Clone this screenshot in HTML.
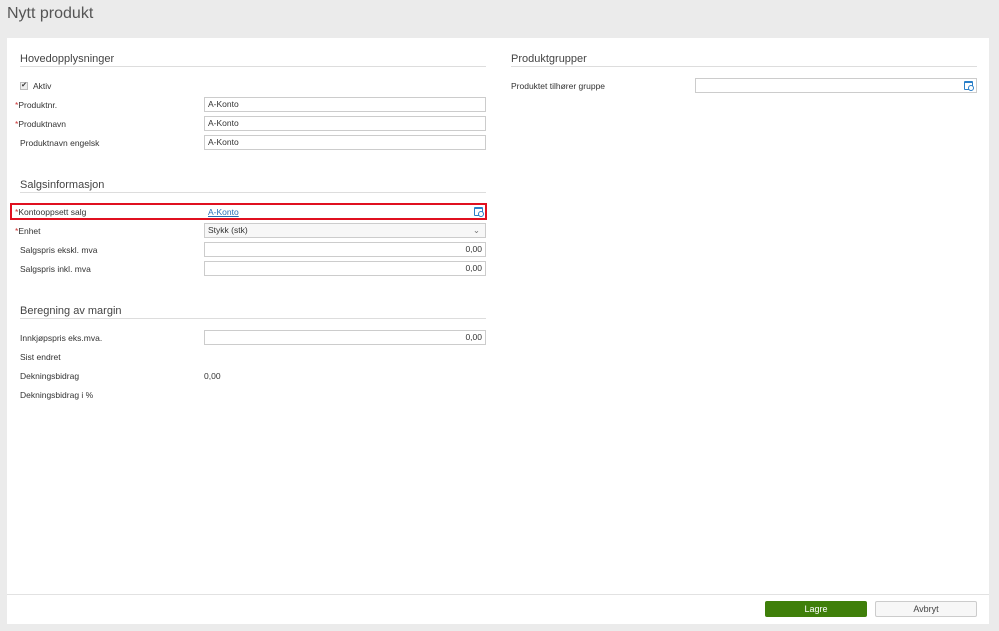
<!DOCTYPE html>
<html><head><meta charset="utf-8"><style>
*{margin:0;padding:0;box-sizing:border-box}
body{width:999px;height:631px;background:#ebebeb;font-family:"Liberation Sans",sans-serif;position:relative;overflow:hidden;color:#333}
.a{position:absolute}
h1{position:absolute;left:7px;top:5px;font-weight:normal;font-size:16px;color:#555}
.panel{position:absolute;left:7px;top:38px;width:982px;height:586px;background:#fff}
.h{position:absolute;font-size:11px;color:#444}
.ln{position:absolute;height:1px;background:#ddd}
.l{position:absolute;font-size:8.5px;color:#333;line-height:10px}
.req{color:#c33;margin-left:-5px}
.in{position:absolute;height:15px;border:1px solid #ccc;font-size:8.5px;line-height:13px;padding:0 3px;color:#333;background:#fff}
.r{text-align:right}
.ic{position:absolute;width:9px;height:9px;border:1.5px solid #2a7fc8;border-top-width:2.5px;border-radius:1px}
.ic:after{content:"";position:absolute;right:-2px;bottom:-2px;width:4px;height:4px;border:1px solid #2a7fc8;border-radius:50%;background:#fff}
</style></head><body>
<h1>Nytt produkt</h1>
<div class="panel"></div>
<div class="h" style="left:20px;top:53px">Hovedopplysninger</div>
<div class="ln" style="left:20px;top:66px;width:466px"></div>
<div class="a" style="left:20px;top:82px;width:8px;height:8px;border:1px solid #bbb;background:#eee;font-size:7px;line-height:6px;text-align:center">✔</div>
<div class="l" style="left:33px;top:81px">Aktiv</div>
<div class="l" style="left:20px;top:100px"><span class="req">*</span>Produktnr.</div>
<div class="in" style="left:204px;top:97px;width:282px">A-Konto</div>
<div class="l" style="left:20px;top:119px"><span class="req">*</span>Produktnavn</div>
<div class="in" style="left:204px;top:116px;width:282px">A-Konto</div>
<div class="l" style="left:20px;top:138px">Produktnavn engelsk</div>
<div class="in" style="left:204px;top:135px;width:282px">A-Konto</div>

<div class="h" style="left:20px;top:179px">Salgsinformasjon</div>
<div class="ln" style="left:20px;top:192px;width:466px"></div>
<div class="a" style="left:10px;top:203px;width:477px;height:17px;border:2px solid #e01020"></div>
<div class="l" style="left:20px;top:207px"><span class="req">*</span>Kontooppsett salg</div>
<div class="l" style="left:208px;top:207px;color:#2a6fb8;text-decoration:underline">A-Konto</div>
<div class="ic" style="left:474px;top:207px"></div>
<div class="l" style="left:20px;top:226px"><span class="req">*</span>Enhet</div>
<div class="in" style="left:204px;top:223px;width:282px;background:#f7f7f7">Stykk (stk)<span style="position:absolute;right:5px;color:#777">⌄</span></div>
<div class="l" style="left:20px;top:245px">Salgspris ekskl. mva</div>
<div class="in r" style="left:204px;top:242px;width:282px">0,00</div>
<div class="l" style="left:20px;top:264px">Salgspris inkl. mva</div>
<div class="in r" style="left:204px;top:261px;width:282px">0,00</div>

<div class="h" style="left:20px;top:305px">Beregning av margin</div>
<div class="ln" style="left:20px;top:318px;width:466px"></div>
<div class="l" style="left:20px;top:333px">Innkjøpspris eks.mva.</div>
<div class="in r" style="left:204px;top:330px;width:282px">0,00</div>
<div class="l" style="left:20px;top:352px">Sist endret</div>
<div class="l" style="left:20px;top:371px">Dekningsbidrag</div>
<div class="l" style="left:204px;top:371px">0,00</div>
<div class="l" style="left:20px;top:390px">Dekningsbidrag i %</div>

<div class="h" style="left:511px;top:53px">Produktgrupper</div>
<div class="ln" style="left:511px;top:66px;width:466px"></div>
<div class="l" style="left:511px;top:81px">Produktet tilhører gruppe</div>
<div class="in" style="left:695px;top:78px;width:282px"></div>
<div class="ic" style="left:964px;top:81px"></div>

<div class="ln" style="left:7px;top:594px;width:982px;background:#e2e2e2"></div>
<div class="a" style="left:765px;top:601px;width:102px;height:16px;background:#3f7f0a;border-radius:2px;color:#fff;font-size:9px;line-height:16px;text-align:center">Lagre</div>
<div class="a" style="left:875px;top:601px;width:102px;height:16px;background:#f7f7f7;border:1px solid #ccc;border-radius:2px;color:#444;font-size:9px;line-height:14px;text-align:center">Avbryt</div>
</body></html>
